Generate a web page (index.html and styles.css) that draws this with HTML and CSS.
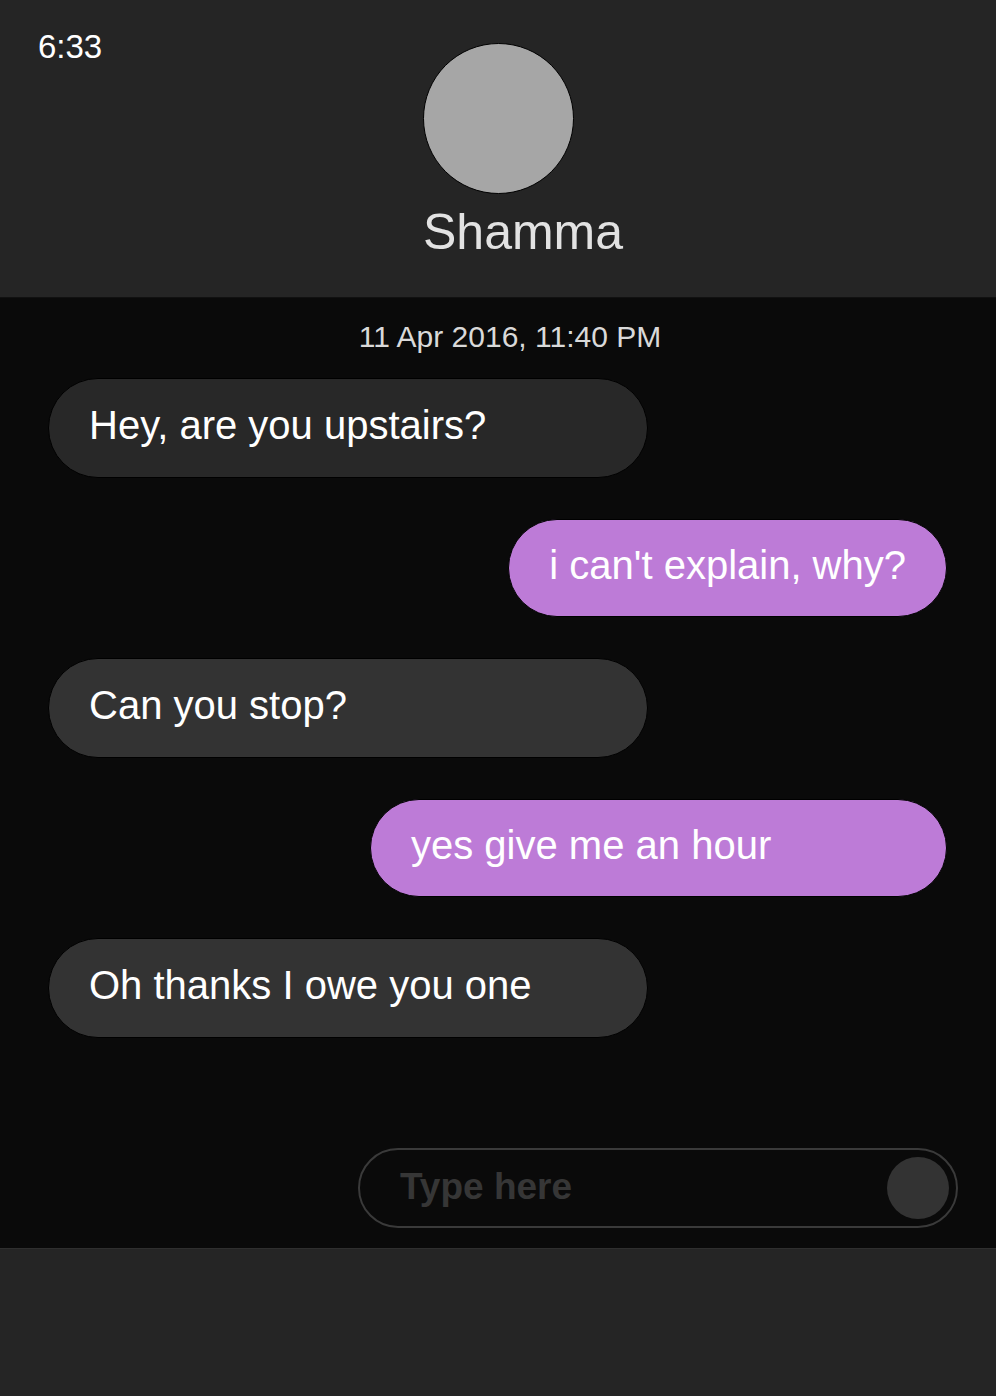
FILE: index.html
```html
<!DOCTYPE html>
<html lang="en">
<head>
<meta charset="utf-8">
<title>Shamma</title>
<link rel="stylesheet" href="styles.css">
</head>
<body>
<div class="app">
  <header class="header">
    <div class="time">6:33</div>
    <div class="profile">
      <div class="avatar"></div>
      <div class="name">Shamma</div>
    </div>
  </header>
  <main class="chat">
    <div class="stamp">11 Apr 2016, 11:40 PM</div>
    <div class="messages">
      <div class="bubble in dim">Hey, are you upstairs?</div>
      <div class="bubble out">i can't explain, why?</div>
      <div class="bubble in">Can you stop?</div>
      <div class="bubble out wide">yes give me an hour</div>
      <div class="bubble in">Oh thanks I owe you one</div>
    </div>
    <div class="composer">
      <div class="input">
        <span class="placeholder">Type here</span>
        <span class="send"></span>
      </div>
    </div>
  </main>
  <footer class="footer"></footer>
</div>
</body>
</html>
```
FILE: styles.css
```css
* { box-sizing: border-box; }
html, body { margin: 0; padding: 0; }
body {
  background: #252525;
  font-family: "Liberation Sans", Arial, Helvetica, sans-serif;
  color: #fff;
}
.app {
  width: 996px;
  height: 1396px;
  display: flex;
  flex-direction: column;
}
.header {
  height: 298px;
  background: #252525;
  border-bottom: 1px solid #111;
  display: flex;
  padding: 28px 0 0 38px;
}
.time {
  width: 385px;
  font-size: 33px;
  line-height: 38px;
  height: 38px;
  color: #fff;
}
.profile {
  display: flex;
  flex-direction: column;
  align-items: flex-start;
  padding-top: 15px;
}
.avatar {
  width: 151px;
  height: 151px;
  border-radius: 50%;
  background: #a6a6a6;
  border: 1.5px solid #000;
}
.name {
  margin-top: 9px;
  font-size: 50px;
  line-height: 58px;
  color: #e2e2e2;
}
.chat {
  height: 950px;
  background: #0a0a0a;
  display: flex;
  flex-direction: column;
  padding-top: 20px;
}
.stamp {
  text-align: center;
  padding-left: 24px;
  font-size: 30px;
  line-height: 38px;
  color: #d9d9d9;
}
.messages {
  margin-top: 22px;
  display: flex;
  flex-direction: column;
  gap: 41px;
  padding: 0 49px 0 48px;
}
.bubble {
  display: flex;
  align-items: center;
  font-size: 40px;
  line-height: 46px;
  color: #fff;
  border: 1px solid #000;
  border-radius: 50px;
  padding: 0 40px 6px;
  white-space: nowrap;
}
.bubble.in {
  align-self: flex-start;
  width: 600px;
  height: 100px;
  background: #333333;
}
.bubble.in.dim { background: #282828; }
.bubble.out {
  align-self: flex-end;
  height: 98px;
  background: #bd7bd7;
}
.bubble.out.wide { width: 577px; }
.composer {
  margin-top: 110px;
  display: flex;
  justify-content: flex-end;
  padding-right: 38px;
}
.input {
  width: 600px;
  height: 80px;
  border: 2px solid #3a3a3a;
  border-radius: 40px;
  display: flex;
  align-items: center;
  justify-content: space-between;
  padding: 0 7px 0 40px;
}
.placeholder {
  font-size: 37px;
  font-weight: bold;
  color: #363636;
  margin-top: -3px;
}
.send {
  width: 62px;
  height: 62px;
  border-radius: 50%;
  background: #333;
}
.footer {
  flex: 1;
  background: #252525;
  border-top: 1px solid #2f2f2f;
}
```
